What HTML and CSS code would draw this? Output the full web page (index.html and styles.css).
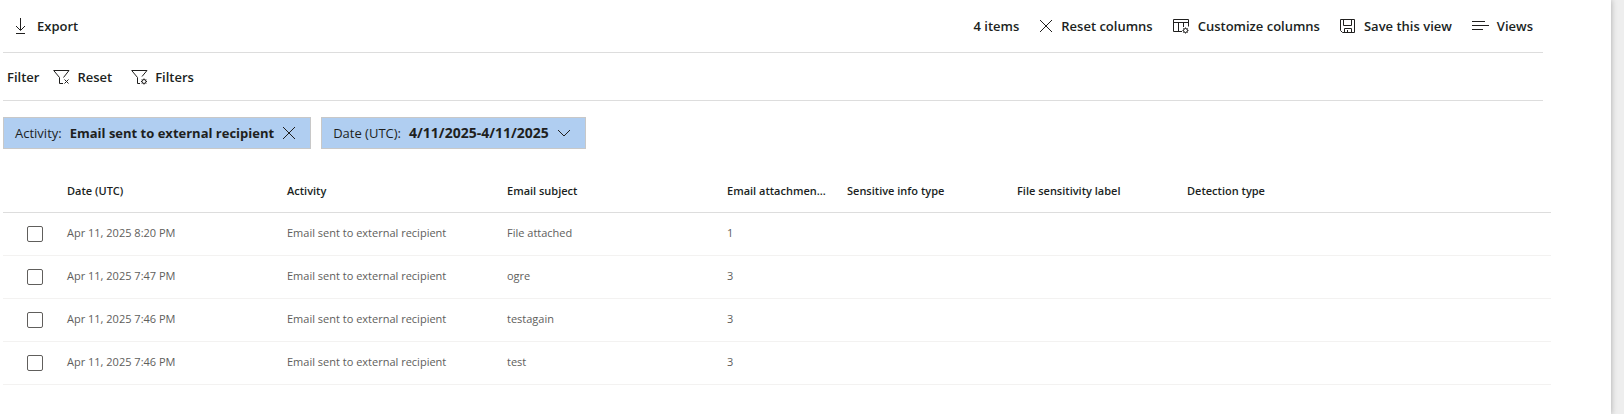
FILE: index.html
```html
<!DOCTYPE html>
<html lang="en">
<head>
    <meta charset="UTF-8">
    <meta name="viewport" content="width=device-width, initial-scale=1.0">
    <title>Activity explorer</title>
    <link rel="stylesheet" href="styles.css">
</head>
<body>
    <main class="panel">
        <!-- Command bar -->
        <div class="toolbar">
            <button type="button" class="command export">
                <svg class="icon" width="16" height="18" viewBox="0 0 16 18"><path d="M7.500 1v12M3 9l4.500 4.500L12 9M3 16.500h9"/></svg>
                Export
            </button>
            <div class="toolbar-right">
                <span class="count">4 items</span>
                <button type="button" class="command">
                    <svg class="icon" width="14" height="14" viewBox="0 0 14 14"><path d="M1 1l12 12M13 1L1 13"/></svg>
                    Reset columns
                </button>
                <button type="button" class="command">
                    <svg class="icon" width="17" height="16" viewBox="0 0 17 16"><path d="M9 13.500H.5v-12h15v7M.5 4.500h15M5.500 4.500v9M10.500 4.500V9"/><circle cx="12.500" cy="12.500" r="2"/><path d="M12.500 9.500v1M12.500 14.500v1M9.500 12.500h1M14.500 12.500h1M10.400 10.400l.7.7M13.900 13.900l.7.7M14.600 10.400l-.7.7M11.100 13.900l-.7.7"/></svg>
                    Customize columns
                </button>
                <button type="button" class="command">
                    <svg class="icon" width="16" height="16" viewBox="0 0 16 16"><path d="M.5 1.500h14v13h-12l-2-2zM3.500 1.500v6h8v-6M4.500 14.500v-4h7v4M7.500 12v2.500"/></svg>
                    Save this view
                </button>
                <button type="button" class="command">
                    <svg class="icon" width="17" height="16" viewBox="0 0 17 16"><path d="M0 3.500h13M0 7.500h17M0 11.500h11"/></svg>
                    Views
                </button>
            </div>
        </div>

        <!-- Filter bar -->
        <div class="toolbar filter-bar">
            <span class="filter-title">Filter</span>
            <button type="button" class="command">
                <svg class="icon" width="17" height="16" viewBox="0 0 17 16"><path d="M10 14.500H6.500V8.500L.7 1.500H16l-5.500 7M11.500 10.500l4 4M15.500 10.500l-4 4"/></svg>
                Reset
            </button>
            <button type="button" class="command filters">
                <svg class="icon" width="17" height="16" viewBox="0 0 17 16"><path d="M9 14.500H6.500V8.500L.7 1.500H16l-5 6"/><circle cx="13" cy="12.500" r="2"/><path d="M13 9.500v1M13 14.500v1M10 12.500h1M15 12.500h1M10.900 10.400l.7.7M14.400 13.900l.7.7M15.100 10.400l-.7.7M11.600 13.900l-.7.7"/></svg>
                Filters
            </button>
        </div>

        <!-- Active filters -->
        <div class="chips">
            <div class="chip">
                <span>Activity:</span>
                <strong>Email sent to external recipient</strong>
                <button type="button" class="chip-btn" aria-label="Remove filter">
                    <svg class="icon" width="14" height="14" viewBox="0 0 14 14"><path d="M1 1l12 12M13 1L1 13"/></svg>
                </button>
            </div>
            <button type="button" class="chip">
                <span>Date (UTC):</span>
                <strong class="date-range">4/11/2025-4/11/2025</strong>
                <svg class="icon" width="14" height="14" viewBox="0 0 14 14"><path d="M1 4l6 6 6-6"/></svg>
            </button>
        </div>

        <table class="activities">
            <colgroup>
                <col class="col-check">
                <col class="col-wide">
                <col class="col-wide">
                <col class="col-wide">
                <col class="col-narrow">
                <col class="col-medium">
                <col class="col-medium">
                <col>
            </colgroup>
            <thead>
                <tr>
                    <td></td>
                    <th scope="col">Date (UTC)</th>
                    <th scope="col">Activity</th>
                    <th scope="col">Email subject</th>
                    <th scope="col">Email attachmen...</th>
                    <th scope="col">Sensitive info type</th>
                    <th scope="col">File sensitivity label</th>
                    <th scope="col">Detection type</th>
                </tr>
            </thead>
            <tbody>
                <tr>
                    <td class="check"><input type="checkbox" aria-label="Select File attached"></td>
                    <td>Apr 11, 2025 8:20 PM</td>
                    <td>Email sent to external recipient</td>
                    <td>File attached</td>
                    <td>1</td>
                    <td></td>
                    <td></td>
                    <td></td>
                </tr>
                <tr>
                    <td class="check"><input type="checkbox" aria-label="Select ogre"></td>
                    <td>Apr 11, 2025 7:47 PM</td>
                    <td>Email sent to external recipient</td>
                    <td>ogre</td>
                    <td>3</td>
                    <td></td>
                    <td></td>
                    <td></td>
                </tr>
                <tr>
                    <td class="check"><input type="checkbox" aria-label="Select testagain"></td>
                    <td>Apr 11, 2025 7:46 PM</td>
                    <td>Email sent to external recipient</td>
                    <td>testagain</td>
                    <td>3</td>
                    <td></td>
                    <td></td>
                    <td></td>
                </tr>
                <tr>
                    <td class="check"><input type="checkbox" aria-label="Select test"></td>
                    <td>Apr 11, 2025 7:46 PM</td>
                    <td>Email sent to external recipient</td>
                    <td>test</td>
                    <td>3</td>
                    <td></td>
                    <td></td>
                    <td></td>
                </tr>
            </tbody>
        </table>
    </main>
</body>
</html>
```

FILE: styles.css
```css
* {
    box-sizing: border-box;
}

body {
    margin: 0;
    padding-right: 13px;
    background-color: #eeeeee;
    color: #201f1e;
    font-family: "Segoe UI", "Open Sans", sans-serif;
    font-size: 13px;
    line-height: 20px;
}

/* White content area */
.panel {
    min-height: 100vh;
    padding: 0 60px 28px 3px;
    background-color: #fff;
    box-shadow: 0 0 6px rgba(0, 0, 0, 0.3);
}

button {
    font: inherit;
    color: inherit;
    background: none;
    border: none;
    padding: 0;
    cursor: pointer;
}

.icon {
    flex: none;
    fill: none;
    stroke: #201f1e;
    stroke-width: 1;
}

/* Toolbars */
.toolbar {
    display: flex;
    align-items: center;
    height: 53px;
    margin-right: 8px;
    border-bottom: 1px solid #dddddd;
    font-weight: 600;
}

.toolbar-right {
    display: flex;
    align-items: center;
    gap: 20px;
    margin-left: auto;
    padding-right: 10px;
}

.command {
    display: flex;
    align-items: center;
    gap: 8px;
    font-weight: 600;
    white-space: nowrap;
}

.export {
    padding-left: 10px;
}

.filter-bar {
    height: 48px;
    padding-left: 4px;
}

.filter-bar .command {
    gap: 7px;
}

.filter-title {
    margin-right: 14px;
}

.filters {
    margin-left: 19px;
}

/* Filter chips */
.chips {
    display: flex;
    gap: 10px;
    margin-top: 16px;
}

.chip {
    display: flex;
    align-items: center;
    gap: 8px;
    height: 32px;
    padding: 0 14px 0 11px;
    background-color: #b0cef1;
    border: 1px solid #c8c8c8;
    white-space: nowrap;
}

.chip-btn {
    display: flex;
}

.date-range {
    font-size: 14px;
}

/* Activities table */
.activities {
    width: 100%;
    margin-top: 21px;
    table-layout: fixed;
    border-collapse: separate;
    border-spacing: 0;
    font-size: 11px;
    line-height: 16px;
}

.activities th,
.activities td {
    height: 43px;
    padding: 0 12px 0 8px;
    border-bottom: 1px solid #f3f2f1;
    color: #605e5c;
    text-align: left;
    vertical-align: middle;
    white-space: nowrap;
}

.activities tbody td {
    padding-bottom: 2px;
}

.activities thead th,
.activities thead td {
    border-bottom-color: #dddddd;
    color: #201f1e;
    font-weight: 600;
}

.activities tbody .check {
    padding: 0 0 0 24px;
}

.col-check {
    width: 56px;
}

.col-wide {
    width: 220px;
}

.col-narrow {
    width: 120px;
}

.col-medium {
    width: 170px;
}

input[type="checkbox"] {
    appearance: none;
    display: block;
    width: 16px;
    height: 16px;
    margin: 0;
    background-color: #fff;
    border: 1px solid #605e5c;
    border-radius: 2px;
}

input[type="checkbox"]:checked {
    background-color: #0078d4;
    border-color: #0078d4;
}
```
